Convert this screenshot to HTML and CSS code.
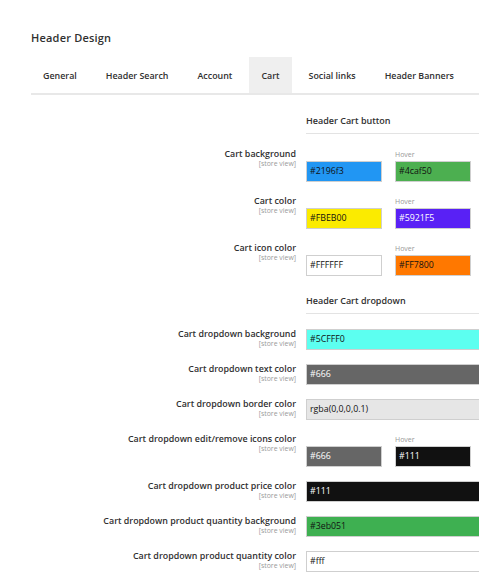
FILE: index.html
```html
<!DOCTYPE html>
<html>
<head>
<meta charset="utf-8">
<link rel="stylesheet" href="styles.css">
</head>
<body>
<div class="page">
  <h1 class="title">Header Design</h1>
  <ul class="tabs">
    <li class="tab">General</li>
    <li class="tab">Header Search</li>
    <li class="tab">Account</li>
    <li class="tab active">Cart</li>
    <li class="tab">Social links</li>
    <li class="tab">Header Banners</li>
  </ul>

  <div class="section">
    <div class="section-head"><span>Header Cart button</span></div>

    <div class="row hover-row">
      <div class="label"><div class="name">Cart background</div><div class="scope">[store view]</div></div>
      <div class="controls">
        <div class="field"><div class="cap"></div><div class="input" style="background:#2196f3;color:#111">#2196f3</div></div>
        <div class="field"><div class="cap">Hover</div><div class="input" style="background:#4caf50;color:#111">#4caf50</div></div>
      </div>
    </div>

    <div class="row hover-row">
      <div class="label"><div class="name">Cart color</div><div class="scope">[store view]</div></div>
      <div class="controls">
        <div class="field"><div class="cap"></div><div class="input" style="background:#FBEB00;color:#111">#FBEB00</div></div>
        <div class="field"><div class="cap">Hover</div><div class="input" style="background:#5921F5;color:#fff">#5921F5</div></div>
      </div>
    </div>

    <div class="row hover-row">
      <div class="label"><div class="name">Cart icon color</div><div class="scope">[store view]</div></div>
      <div class="controls">
        <div class="field"><div class="cap"></div><div class="input" style="background:#FFFFFF;color:#111">#FFFFFF</div></div>
        <div class="field"><div class="cap">Hover</div><div class="input" style="background:#FF7800;color:#111">#FF7800</div></div>
      </div>
    </div>
  </div>

  <div class="section second">
    <div class="section-head"><span>Header Cart dropdown</span></div>

    <div class="row">
      <div class="label"><div class="name">Cart dropdown background</div><div class="scope">[store view]</div></div>
      <div class="controls"><div class="input wide" style="background:#5CFFF0;color:#111">#5CFFF0</div></div>
    </div>

    <div class="row">
      <div class="label"><div class="name">Cart dropdown text color</div><div class="scope">[store view]</div></div>
      <div class="controls"><div class="input wide" style="background:#666;color:#fff">#666</div></div>
    </div>

    <div class="row">
      <div class="label"><div class="name">Cart dropdown border color</div><div class="scope">[store view]</div></div>
      <div class="controls"><div class="input wide" style="background:#e6e6e6;color:#111">rgba(0,0,0,0.1)</div></div>
    </div>

    <div class="row hover-row">
      <div class="label"><div class="name">Cart dropdown edit/remove icons color</div><div class="scope">[store view]</div></div>
      <div class="controls">
        <div class="field"><div class="cap"></div><div class="input" style="background:#666;color:#fff">#666</div></div>
        <div class="field"><div class="cap">Hover</div><div class="input" style="background:#111;color:#fff">#111</div></div>
      </div>
    </div>

    <div class="row">
      <div class="label"><div class="name">Cart dropdown product price color</div><div class="scope">[store view]</div></div>
      <div class="controls"><div class="input wide" style="background:#111;color:#fff">#111</div></div>
    </div>

    <div class="row">
      <div class="label"><div class="name">Cart dropdown product quantity background</div><div class="scope">[store view]</div></div>
      <div class="controls"><div class="input wide" style="background:#3eb051;color:#111">#3eb051</div></div>
    </div>

    <div class="row">
      <div class="label"><div class="name">Cart dropdown product quantity color</div><div class="scope">[store view]</div></div>
      <div class="controls"><div class="input wide" style="background:#fff;color:#111">#fff</div></div>
    </div>
  </div>
</div>
</body>
</html>
```

FILE: styles.css
```css
html, body {
  margin: 0;
  padding: 0;
  background: #fff;
  overflow: hidden;
}
body {
  font-family: "Open Sans", "Liberation Sans", sans-serif;
  color: #303030;
  width: 479px;
  height: 576px;
}
.page {
  padding-top: 31px;
}
.title {
  margin: 0 0 0 31px;
  font-size: 11px;
  line-height: 14px;
  font-weight: 600;
  color: #303030;
  letter-spacing: 0.2px;
}
.tabs {
  list-style: none;
  margin: 12px 0 0 31px;
  padding: 0;
  display: flex;
  gap: 5px;
  border-bottom: 2px solid #e8e8e8;
}
.tab {
  padding: 1px 12px 0;
  height: 35px;
  line-height: 35px;
  font-size: 8.9px;
  font-weight: 600;
  color: #303030;
  white-space: nowrap;
}
.tab.active {
  background: #efefef;
}
.section {
  margin-top: 20px;
}
.section.second {
  margin-top: 19px;
}
.section-head {
  margin-left: 306px;
  border-bottom: 1px solid #e3e3e3;
  padding-bottom: 6px;
  margin-bottom: 15px;
  font-size: 9px;
  line-height: 12px;
  font-weight: 600;
  color: #303030;
}
.row {
  display: flex;
  margin-bottom: 14px;
}
.label {
  width: 296px;
  flex: none;
  text-align: right;
  margin-right: 10px;
}
.name {
  font-size: 8.9px;
  line-height: 10px;
  font-weight: 600;
  color: #303030;
  white-space: nowrap;
}
.scope {
  font-size: 6.9px;
  line-height: 10px;
  color: #999;
}
.controls {
  display: flex;
  gap: 13px;
}
.field {
  display: flex;
  flex-direction: column;
}
.cap {
  height: 12px;
  line-height: 12px;
  font-size: 7px;
  color: #999;
}
.input {
  box-sizing: border-box;
  width: 76px;
  height: 21px;
  line-height: 19px;
  border: 1px solid #cfcfcf;
  padding: 0 3px;
  font-size: 8.8px;
  white-space: nowrap;
}
.input.wide {
  width: 260px;
}
```
